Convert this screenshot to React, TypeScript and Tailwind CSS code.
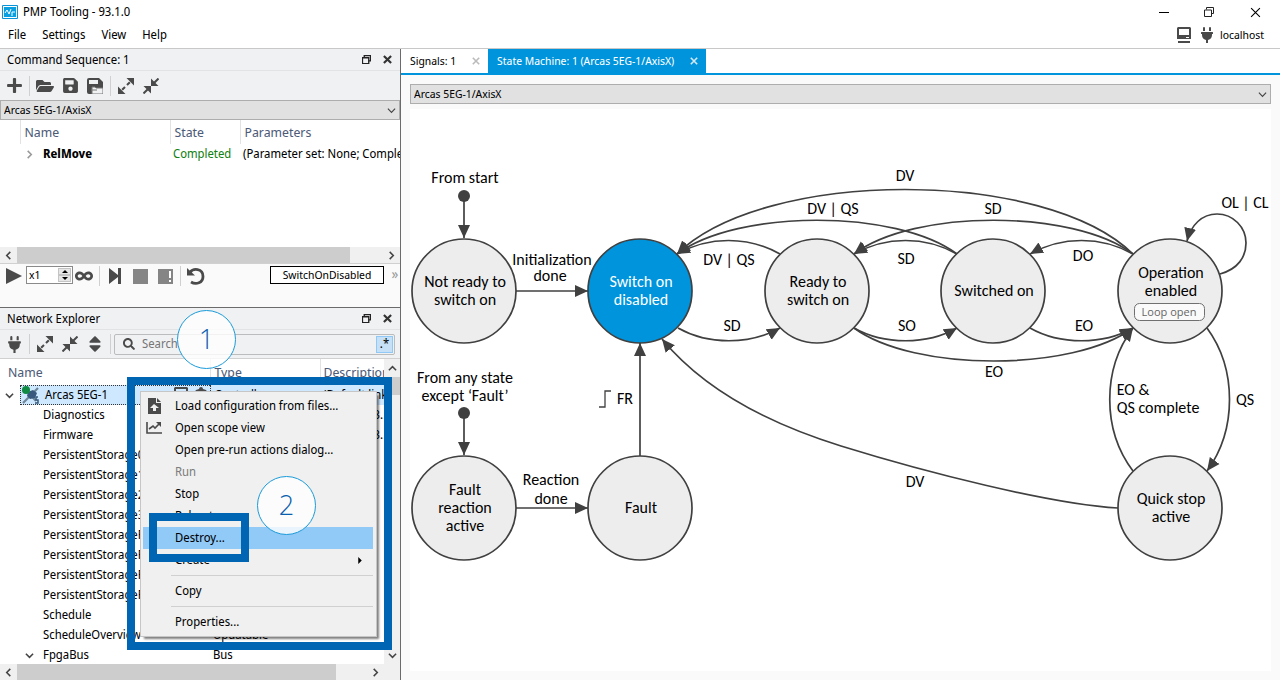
import type { ReactNode } from "react";
import { FaFolderOpen, FaInfinity, FaPlug, FaPlus, FaSave, FaSearch, FaSort } from "react-icons/fa";

type TreeRow = {
  name: string;
  type?: string;
  desc?: string;
  expandable?: boolean;
};

const treeRows: TreeRow[] = [
  { name: "Diagnostics", desc: "3." },
  { name: "Firmware", desc: "3." },
  { name: "PersistentStorage0" },
  { name: "PersistentStorage1" },
  { name: "PersistentStorage2" },
  { name: "PersistentStorage3" },
  { name: "PersistentStorageR0" },
  { name: "PersistentStorageR1" },
  { name: "PersistentStorageR2" },
  { name: "PersistentStorageR3" },
  { name: "Schedule" },
  { name: "ScheduleOverview", type: "Updatable" },
  { name: "FpgaBus", type: "Bus", expandable: true },
];

// arrows between the states, every one ends at its arrow head
const transitions = [
  "M464 196 V238",
  "M464 413 V455",
  "M516 291 H588",
  "M516 508 H588",
  "M640 456 V343",
  "M1133 254 C1045 168 765 168 677 254",
  "M957 254 C896 209 738 209 677 254",
  "M780 254 C748 236 709 236 677 254",
  "M678 328 C708 345 750 345 780 328",
  "M1133 254 C1073 209 914 209 854 254",
  "M957 254 C925 236 886 236 854 254",
  "M1133 254 C1101 236 1062 236 1030 254",
  "M854 328 C884 345 927 345 957 328",
  "M1030 328 C1060 345 1103 345 1133 328",
  "M854 328 C914 372 1073 372 1133 328",
  "M1133 471 C1102 430 1102 369 1133 328",
  "M1207 328 C1237 369 1237 430 1207 471",
  "M1118 508 C1050 504 925 472 841 446 C770 424 704 390 662 339",
  "M1220 274 C1238 269 1246 257 1246 243 C1246 227 1233 214 1217 214 C1202 214 1191 225 1187 241",
];

const states = [
  { x: 464, y: 291, lines: ["Not ready to", "switch on"] },
  { x: 640, y: 291, lines: ["Switch on", "disabled"], active: true },
  { x: 817, y: 291, lines: ["Ready to", "switch on"] },
  { x: 993, y: 291, lines: ["Switched on"] },
  { x: 1170, y: 291, lines: ["Operation", "enabled"], top: 273 },
  { x: 464, y: 508, lines: ["Fault", "reaction", "active"] },
  { x: 640, y: 508, lines: ["Fault"] },
  { x: 1170, y: 508, lines: ["Quick stop", "active"] },
];

const labels: [string, number, number][] = [
  ["From start", 465, 183],
  ["Initialization", 552, 265],
  ["done", 550, 281],
  ["From any state", 465, 383],
  ["except ‘Fault’", 465, 401],
  ["Reaction", 551, 485],
  ["done", 551, 504],
  ["FR", 625, 404],
  ["DV", 905, 181],
  ["DV | QS", 833, 214],
  ["SD", 993, 214],
  ["OL | CL", 1245, 208],
  ["DV | QS", 729, 265],
  ["SD", 906, 264],
  ["DO", 1083, 261],
  ["SD", 732, 331],
  ["SO", 907, 331],
  ["EO", 1084, 331],
  ["EO", 994, 377],
  ["EO &", 1133, 395],
  ["QS complete", 1158, 413],
  ["QS", 1245, 405],
  ["DV", 915, 487],
];

function ExpandIcon() {
  return (
    <svg viewBox="0 0 16 16" className="size-4" fill="#4a4a4a" stroke="#4a4a4a" strokeWidth="2">
      <path d="M9 7 L13 3 M7 9 L3 13" strokeDasharray="4 1.5" />
      <path d="M8.5 0 H16 V7.5 Z M0 8.5 V16 H7.5 Z" stroke="none" />
    </svg>
  );
}

function CollapseIcon() {
  return (
    <svg viewBox="0 0 16 16" className="size-4" fill="#4a4a4a" stroke="#4a4a4a" strokeWidth="2">
      <path d="M11 5 L15.5 .5 M5 11 L.5 15.5" />
      <path d="M8 .5 V8 H15.5 Z M.5 8 H8 V15.5 Z" stroke="none" />
    </svg>
  );
}

function SaveAsIcon() {
  return (
    <svg viewBox="0 0 16 16" className="size-4">
      <path d="M2 0 H12 L16 4 V14 Q16 16 14 16 H2 Q0 16 0 14 V2 Q0 0 2 0 Z" fill="#4a4a4a" />
      <path d="M2 2 H11 V6 H2 Z" fill="#f0f1f3" />
      <path d="M5 9 H8 L9 10 H16 V16 H5 Z" fill="#f0f1f3" stroke="#777" />
      <path d="M4 12 H10" stroke="#777" />
    </svg>
  );
}

function RestoreIcon({ thin }: { thin?: boolean }) {
  return (
    <svg viewBox="0 0 10 10" className={thin ? "size-[10px]" : "size-[9px]"} fill="none" stroke="#222">
      <path d="M2.5 2.5 V.5 H9.5 V6.5 H7.5" strokeWidth={thin ? 1 : 1.5} />
      <path d="M.5 3 H7.5 V9.5 H.5 Z" strokeWidth={thin ? 1 : 1.5} />
    </svg>
  );
}

function CloseIcon({ color = "#333", width = 2.4, size = "size-2" }: { color?: string; width?: number; size?: string }) {
  return (
    <svg viewBox="0 0 10 10" className={size} fill="none" stroke={color} strokeWidth={width}>
      <path d="M1 1 L9 9 M9 1 L1 9" />
    </svg>
  );
}

function Chevron({ dir, color = "#444", width = 1.7 }: { dir: "up" | "down" | "left" | "right"; color?: string; width?: number }) {
  const paths = {
    up: "M1 7 L5 3 L9 7",
    down: "M1 3 L5 7 L9 3",
    left: "M7 1 L3 5 L7 9",
    right: "M3 1 L7 5 L3 9",
  };
  return (
    <svg viewBox="0 0 10 10" className="size-[9px]" fill="none" stroke={color} strokeWidth={width}>
      <path d={paths[dir]} />
    </svg>
  );
}

function MonitorIcon() {
  return (
    <svg viewBox="0 0 14 16" className="h-4 w-[14px]" fill="#4a4a4a">
      <path fillRule="evenodd" d="M1 0 H13 L14 1 V12 H0 V1 Z M2 2 V8 H12 V2 Z M9 10 V11 H12 V10 Z" />
      <path d="M1 14 H13 V16 H1 Z" />
    </svg>
  );
}

function ToolButton({ label, children }: { label: string; children: ReactNode }) {
  return (
    <button type="button" aria-label={label} className="flex size-5 items-center justify-center text-[#4a4a4a]">
      {children}
    </button>
  );
}

function Divider() {
  return <span className="h-5 w-px bg-[#d0d0d0]" />;
}

function PanelHeader({ title }: { title: string }) {
  return (
    <header className="flex h-[22px] shrink-0 items-center border-b border-[#e2e3e5] bg-[#f0f1f3] pr-2 pl-[7px]">
      <h2 className="flex-1">{title}</h2>
      <button type="button" aria-label={`Float ${title}`} className="mr-3">
        <RestoreIcon />
      </button>
      <button type="button" aria-label={`Close ${title}`}>
        <CloseIcon size="size-[9px]" />
      </button>
    </header>
  );
}

function AxisSelect({ id }: { id: string }) {
  return (
    <div className="relative">
      <select
        id={id}
        aria-label="Axis"
        className="block h-5 w-full appearance-none border border-[#adadad] bg-[#e1e1e1] pl-[3px] text-[11px] outline-none"
      >
        <option>Arcas 5EG-1/AxisX</option>
      </select>
      <span className="pointer-events-none absolute inset-y-0 right-1 flex items-center">
        <Chevron dir="down" width={1.3} />
      </span>
    </div>
  );
}

function HorizontalScroll({ end, thumb }: { end?: string; thumb: string }) {
  return (
    <div className={`flex h-4 shrink-0 items-center bg-[#f0f0f0] ${end ?? ""}`}>
      <span className="flex w-[17px] justify-center">
        <Chevron dir="left" />
      </span>
      <div className="h-full flex-1">
        <div className={`h-full bg-[#cdcdcd] ${thumb}`} />
      </div>
      <span className="flex w-[17px] justify-center">
        <Chevron dir="right" />
      </span>
    </div>
  );
}

function CommandSequence() {
  return (
    <section className="flex h-[259px] shrink-0 flex-col border-b border-[#6b6b6b] bg-[#fafafa]">
      <PanelHeader title="Command Sequence: 1" />
      <div className="flex h-[29px] items-center gap-[5px] bg-[#f0f1f3] pl-1">
        <ToolButton label="Add"><FaPlus size={17} /></ToolButton>
        <Divider />
        <ToolButton label="Open"><FaFolderOpen size={18} /></ToolButton>
        <ToolButton label="Save"><FaSave size={17} /></ToolButton>
        <ToolButton label="Save as"><SaveAsIcon /></ToolButton>
        <Divider />
        <ToolButton label="Expand all"><ExpandIcon /></ToolButton>
        <ToolButton label="Collapse all"><CollapseIcon /></ToolButton>
      </div>
      <AxisSelect id="sequence-axis" />
      <div className="min-h-0 flex-1 overflow-hidden bg-white">
        <table className="w-full table-fixed">
          <colgroup>
            <col className="w-[20px]" />
            <col className="w-[150px]" />
            <col className="w-[70px]" />
            <col />
          </colgroup>
          <thead>
            <tr className="h-6 text-left text-[13px] text-[#4d5b78]">
              <th className="border-r border-[#e2e2e2]" />
              <th className="border-r border-[#e2e2e2] pl-1 font-normal">Name</th>
              <th className="border-r border-[#e2e2e2] pl-1 font-normal">State</th>
              <th className="pl-1 font-normal">Parameters</th>
            </tr>
          </thead>
          <tbody>
            <tr className="h-5">
              <td />
              <td className="pl-[5px]">
                <span className="flex items-center gap-[9px] font-bold">
                  <Chevron dir="right" color="#999" />
                  RelMove
                </span>
              </td>
              <td className="pl-[3px] text-[#128012]">Completed</td>
              <td className="overflow-hidden pl-[3px] whitespace-nowrap">(Parameter set: None; Completed)</td>
            </tr>
          </tbody>
        </table>
      </div>
      <HorizontalScroll thumb="w-[91%]" />
      <div className="flex h-[44px] items-start gap-[5px] border-t border-[#d0d0d0] pt-[2px] pl-1">
        <ToolButton label="Run">
          <svg viewBox="0 0 16 16" className="size-4" fill="#4a4a4a"><path d="M0 0 L16 8 L0 16 Z" /></svg>
        </ToolButton>
        <div className="-mr-1 -ml-[3px] flex h-[18px] w-[47px] border border-[#8a8a8a] bg-white p-px">
          <input aria-label="Repeat count" defaultValue="x1" className="w-[30px] pl-px text-[11px] outline-none" />
          <div className="flex flex-1 flex-col bg-[#e6e6e6]">
            <button type="button" aria-label="Increase" className="flex flex-1 items-center justify-center border border-[#c4c4c4]">
              <svg viewBox="0 0 6 3" className="h-[3px] w-[6px]"><path d="M0 3 L3 0 L6 3 Z" /></svg>
            </button>
            <button type="button" aria-label="Decrease" className="flex flex-1 items-center justify-center border border-[#c4c4c4]">
              <svg viewBox="0 0 6 3" className="h-[3px] w-[6px]"><path d="M0 0 L3 3 L6 0 Z" /></svg>
            </button>
          </div>
        </div>
        <ToolButton label="Repeat forever">
          <FaInfinity size={18} className="shrink-0" />
        </ToolButton>
        <Divider />
        <ToolButton label="Step">
          <svg viewBox="0 0 12 16" className="h-4 w-3" fill="#4a4a4a"><path d="M0 0 L9 7 V0 H12 V16 H9 V9 L0 16 Z" /></svg>
        </ToolButton>
        <ToolButton label="Stop"><span className="size-[15px] bg-[#858585]" /></ToolButton>
        <ToolButton label="Stop on error">
          <svg viewBox="0 0 15 15" className="size-[15px]">
            <path d="M0 0 H15 V15 H0 Z" fill="#858585" />
            <path d="M11 2 H13 V9 H11 Z M11 11 H13 V13 H11 Z" fill="#fff" />
          </svg>
        </ToolButton>
        <Divider />
        <ToolButton label="Reset">
          <svg viewBox="0 0 18 18" className="size-[18px]" fill="none" stroke="#4a4a4a" strokeWidth="2.8">
            <path d="M3 5.5 C6 1 16 1 16 9.5 C16 16 9 18 4 15" />
            <path d="M0 1 V8.5 H8 Z" fill="#4a4a4a" stroke="none" />
          </svg>
        </ToolButton>
        <button type="button" className="mr-px ml-auto h-[18px] w-[114px] border border-black bg-white text-[11px]">
          SwitchOnDisabled
        </button>
        <button type="button" aria-label="More" className="w-[10px] text-sm leading-[16px] text-[#999]">»</button>
      </div>
    </section>
  );
}

function MenuItem({ label, icon, disabled, active, arrow }: { label: string; icon?: ReactNode; disabled?: boolean; active?: boolean; arrow?: boolean }) {
  return (
    <button
      type="button"
      role="menuitem"
      disabled={disabled}
      className={`flex h-[22px] w-full items-center text-left disabled:text-[#7d7d7d] ${active ? "bg-[#91c9f7]" : ""}`}
    >
      <span className="flex w-8 pl-[3px]">{icon}</span>
      <span className="flex-1">{label}</span>
      {arrow && (
        <svg viewBox="0 0 4 8" className="mr-[11px] h-[7px] w-1"><path d="M0 0 L4 4 L0 8 Z" /></svg>
      )}
    </button>
  );
}

function ContextMenu() {
  return (
    <div
      role="menu"
      className="absolute top-[83px] left-[140px] w-[237px] border border-[#c6c6c6] bg-[#f0f0f0] py-[3px] pr-[3px] pl-[2px] shadow-[3px_3px_2px_-1px_rgba(0,0,0,0.5)]"
    >
      <MenuItem
        label="Load configuration from files..."
        icon={
          <svg viewBox="0 0 14 16" className="ml-[2px] h-4 w-[14px]" fill="#4a4a4a">
            <path fillRule="evenodd" d="M0 0 H8 V5 H13 V16 H0 Z M6 6 L2 10 H5 V13 H8 V10 H11 Z" />
            <path d="M9 0 L13 4 H9 Z" />
          </svg>
        }
      />
      <MenuItem
        label="Open scope view"
        icon={
          <svg viewBox="0 0 16 14" className="h-[14px] w-4" fill="none" stroke="#4a4a4a" strokeWidth="1.6">
            <path d="M1 1 V12 H16" />
            <path d="M3 8 L7 5 L9 7 L13 3" />
            <path d="M10 1 H15 V6 Z" fill="#4a4a4a" stroke="none" />
          </svg>
        }
      />
      <MenuItem label="Open pre-run actions dialog..." />
      <MenuItem label="Run" disabled />
      <MenuItem label="Stop" />
      <MenuItem label="Reboot" />
      <MenuItem label="Destroy..." active />
      <MenuItem label="Create" arrow />
      <hr className="my-1 ml-7 border-[#d0d0d0]" />
      <MenuItem label="Copy" />
      <hr className="my-1 ml-7 border-[#d0d0d0]" />
      <MenuItem label="Properties..." />
    </div>
  );
}

function NetworkExplorer() {
  return (
    <section className="relative flex min-h-0 flex-1 flex-col bg-white">
      <PanelHeader title="Network Explorer" />
      <div className="flex h-[29px] shrink-0 items-center gap-[5px] border-b border-[#d0d0d0] bg-[#f0f1f3] pr-[5px] pl-1">
        <ToolButton label="Connect"><FaPlug size={17} /></ToolButton>
        <Divider />
        <ToolButton label="Expand all"><ExpandIcon /></ToolButton>
        <ToolButton label="Collapse all"><CollapseIcon /></ToolButton>
        <ToolButton label="Sort"><FaSort size={20} /></ToolButton>
        <Divider />
        <div className="-ml-[2px] flex h-[21px] flex-1 items-center rounded-xs border border-[#bcbcbc] pr-px pl-2">
          <FaSearch size={12} className="text-[#4a4a4a]" />
          <input aria-label="Search" placeholder="Search" className="min-w-0 flex-1 pl-[7px] outline-none placeholder:text-[#777]" />
          <button type="button" aria-label="Use regular expression" className="h-[17px] w-[17px] border border-[#90c8f6] bg-[#c5e0f7] leading-[14px]">
            .*
          </button>
        </div>
      </div>
      <div className="flex min-h-0 flex-1">
        <div className="min-w-0 flex-1 overflow-hidden">
          <table className="w-full table-fixed whitespace-nowrap">
            <colgroup>
              <col className="w-[210px]" />
              <col className="w-[110px]" />
              <col />
            </colgroup>
            <thead>
              <tr className="h-[26px] text-left text-[13px] text-[#4d5b78]">
                <th className="border-r border-[#e2e2e2] pl-2 font-normal">Name</th>
                <th className="border-r border-[#e2e2e2] pl-1 font-normal">Type</th>
                <th className="overflow-hidden pl-[3px] font-normal">Description</th>
              </tr>
            </thead>
            <tbody>
              <tr className="h-5">
                <td className="p-0">
                  <div className="flex h-5 items-center">
                    <span className="w-5 pl-[5px]"><Chevron dir="down" /></span>
                    <div className="flex h-full flex-1 items-center border-y border-l border-dotted border-[#333] bg-[#cde8ff]">
                      <svg viewBox="0 0 18 18" className="ml-px size-[18px]">
                        <path d="M1 17 L16 2 M4 4 L14 15" stroke="#6f8798" strokeWidth="2.2" />
                        <path d="M6 6 L11 4 L15 7 L13 12 L8 13 L5 10 Z" fill="#38597d" />
                        <path d="M16 11 H14 V14 H16 V17 H13" fill="none" stroke="#38597d" strokeWidth="1.5" />
                        <circle cx="4" cy="4" r="4" fill="#118a43" />
                      </svg>
                      <span className="ml-[5px] flex-1">Arcas 5EG-1</span>
                      <MonitorIcon />
                      <svg viewBox="0 0 14 16" className="mr-[2px] ml-[6px] h-4 w-[14px]" fill="#4a4a4a">
                        <path d="M5 2 Q5 0 7 0 Q9 0 9 2 L12 3 L14 6 V14 H0 V6 L2 3 Z" />
                      </svg>
                    </div>
                  </div>
                </td>
                <td className="border-l border-dotted border-[#333] bg-[#cde8ff] pl-1">Controller</td>
                <td className="overflow-hidden bg-[#cde8ff] pl-[3px]">(Default link)</td>
              </tr>
              {treeRows.map((row) => (
                <tr key={row.name} className="h-5">
                  <td className="p-0">
                    <span className="flex items-center">
                      <span className="w-[43px] pl-[25px]">{row.expandable && <Chevron dir="down" />}</span>
                      {row.name}
                    </span>
                  </td>
                  <td className="pl-[3px]">{row.type}</td>
                  <td className="pr-px text-right">{row.desc}</td>
                </tr>
              ))}
            </tbody>
          </table>
        </div>
        <div className="flex w-4 flex-col items-center bg-[#f0f0f0]">
          <span className="flex h-[18px] items-center"><Chevron dir="up" /></span>
          <div className="w-full flex-1">
            <div className="h-[18px] bg-[#cdcdcd]" />
          </div>
          <span className="flex h-[18px] items-center"><Chevron dir="down" /></span>
        </div>
      </div>
      <HorizontalScroll thumb="w-[91%]" end="pr-4" />

      <ContextMenu />
      <div className="pointer-events-none absolute top-[69px] left-[127px] h-[273px] w-[265px] border-8 border-[#0066b3]" />
      <div className="pointer-events-none absolute top-[205px] left-[149px] h-[49px] w-[100px] border-8 border-[#0066b3]" />
      <Callout className="top-[2px] left-[177px]">1</Callout>
      <Callout className="top-[168px] left-[257px]">2</Callout>
    </section>
  );
}

function Callout({ className, children }: { className: string; children: ReactNode }) {
  return (
    <div
      className={`pointer-events-none absolute flex size-[59px] items-center justify-center rounded-full border border-[#1a9bd9] bg-white/80 pb-[2px] font-['Open_Sans','Noto_Sans',sans-serif] text-[27px] font-light text-[#0a5fae] ${className}`}
    >
      {children}
    </div>
  );
}

function StateMachine() {
  return (
    <svg viewBox="410 109 861 562" className="size-full font-[Carlito,'Open_Sans',sans-serif] text-[16px]">
      <defs>
        <marker id="head" markerUnits="userSpaceOnUse" markerWidth="14" markerHeight="14" refX="13" refY="7" orient="auto">
          <path d="M0 1 L13 7 L0 13 Z" fill="#404040" />
        </marker>
      </defs>
      {states.map((s) => {
        const first = (s.top ?? s.y - (s.lines.length - 1) * 9) + 5;
        return (
          <g key={`${s.x}-${s.y}`}>
            <circle cx={s.x} cy={s.y} r="52" fill={s.active ? "#0094dc" : "#ededed"} stroke="#404040" strokeWidth="1.7" />
            {s.lines.map((line, i) => (
              <text key={line} x={s.x + 1} y={first + i * 18} textAnchor="middle" fill={s.active ? "#fff" : "#000"}>
                {line}
              </text>
            ))}
          </g>
        );
      })}
      <g fill="none" stroke="#404040" strokeWidth="1.7">
        {transitions.map((d) => (
          <path key={d} d={d} markerEnd="url(#head)" />
        ))}
        <path d="M599 407 H605 V391 H611" strokeWidth="1.3" />
      </g>
      <circle cx="464" cy="196" r="6" fill="#404040" />
      <circle cx="464" cy="413" r="6" fill="#404040" />
      {labels.map(([text, x, y]) => (
        <text key={`${x}-${y}`} x={x} y={y} textAnchor="middle">
          {text}
        </text>
      ))}
      <rect x="1134.5" y="303.5" width="70" height="17" rx="5" fill="#fafafa" stroke="#707070" />
      <text x="1169" y="316" textAnchor="middle" fill="#666" className="font-['Open_Sans','Noto_Sans',sans-serif] text-[11px]">
        Loop open
      </text>
    </svg>
  );
}

export default function App() {
  return (
    <div className="flex h-screen flex-col bg-white font-['Noto_Sans_Display','Noto_Sans','Open_Sans',sans-serif] text-[12px] leading-4 text-black">
      <header className="shrink-0 border-b border-[#c8c8c8]">
        <div className="flex h-6 items-center pr-[19px] pl-[2px]">
          <svg viewBox="0 0 16 14" className="mr-[5px] h-[14px] w-4">
            <path d="M.5 .5 H15.5 V13.5 H.5 Z" fill="#fff" stroke="#0a94d8" />
            <path d="M2 2 H14 V12 H2 Z" fill="#0a9fe0" />
            <path d="M3 8 L5 5 L7 9 L9 4 M10 11 V7 H13" fill="none" stroke="#fff" />
          </svg>
          <h1 className="flex-1">PMP Tooling - 93.1.0</h1>
          <button type="button" aria-label="Minimize" className="mr-[35px] h-px w-[10px] bg-black" />
          <button type="button" aria-label="Restore" className="mr-[36px]"><RestoreIcon thin /></button>
          <button type="button" aria-label="Close"><CloseIcon color="#000" width={1} size="size-[11px]" /></button>
        </div>
        <nav className="flex h-6 items-center gap-4 pr-4 pb-[3px] pl-2">
          <button type="button">File</button>
          <button type="button">Settings</button>
          <button type="button">View</button>
          <button type="button">Help</button>
          <div className="ml-auto flex items-center text-[#4a4a4a]">
            <MonitorIcon />
            <FaPlug size={16} className="mr-[5px] ml-2" />
            <span className="text-[11px] text-black">localhost</span>
          </div>
        </nav>
      </header>

      <main className="flex min-h-0 flex-1">
        <aside className="flex w-5/16 min-w-[400px] flex-col">
          <CommandSequence />
          <NetworkExplorer />
        </aside>

        <section className="flex min-w-0 flex-1 flex-col border-l border-[#6b6b6b] bg-[#fafafa]">
          <div role="tablist" className="flex h-[26px] shrink-0 border-b-2 border-[#0094dc] bg-white text-[11px]">
            <div className="flex items-center pr-2 pl-[9px]">
              <button type="button" role="tab" aria-selected="false" className="mr-4">Signals: 1</button>
              <button type="button" aria-label="Close Signals: 1"><CloseIcon color="#bbb" width={2} /></button>
            </div>
            <div className="flex items-center bg-[#0094dc] pr-2 pl-[9px] text-white">
              <button type="button" role="tab" aria-selected="true" className="mr-4">State Machine: 1 (Arcas 5EG-1/AxisX)</button>
              <button type="button" aria-label="Close State Machine: 1"><CloseIcon color="#d5e9f5" width={2} /></button>
            </div>
          </div>
          <div className="flex min-h-0 flex-1 flex-col gap-[5px] p-[9px]">
            <AxisSelect id="machine-axis" />
            <div className="min-h-0 flex-1 bg-white">
              <StateMachine />
            </div>
          </div>
        </section>
      </main>
    </div>
  );
}
